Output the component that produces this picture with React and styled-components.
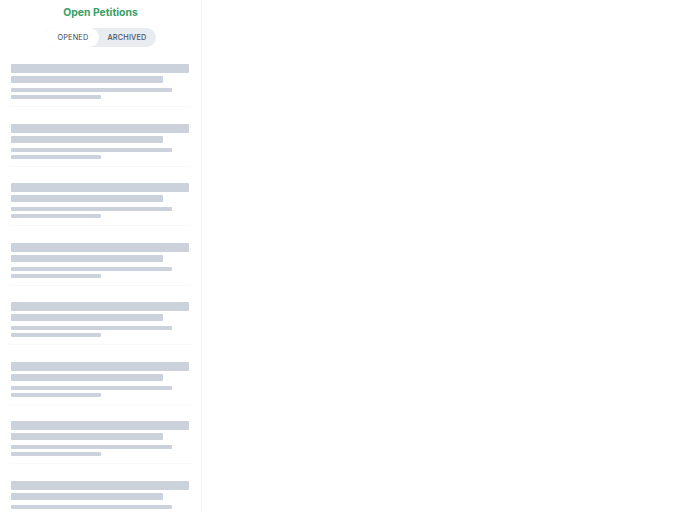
import React from "react";
import styled, { createGlobalStyle } from "styled-components";

const Global = createGlobalStyle`
  html, body { margin: 0; padding: 0; background: #fff; }
  body { font-family: Inter, "Noto Sans", sans-serif; }
  * { box-sizing: border-box; }
`;

const Layout = styled.div`
  display: flex;
  height: 100vh;
  overflow: hidden;
`;

const Sidebar = styled.aside`
  width: 202px;
  flex: none;
  border-right: 1px solid #f1f2f4;
  display: flex;
  flex-direction: column;
  overflow: hidden;
`;

const Title = styled.h1`
  margin: 6px 0 0;
  text-align: center;
  font-size: 10.4px;
  font-weight: 700;
  line-height: 13px;
  color: #38a169;
`;

const Toggle = styled.div`
  align-self: center;
  margin-top: 9px;
  display: flex;
  background: #e8ebf0;
  border-radius: 999px;
  height: 19px;
  margin-left: -1px;
`;

const ToggleButton = styled.button`
  border: none;
  font-family: inherit;
  font-size: 7.3px;
  font-weight: ${(p) => (p.$active ? 400 : 500)};
  letter-spacing: 0.2px;
  text-transform: uppercase;
  color: ${(p) => (p.$active ? "#3c4656" : "#4a5568")};
  background: ${(p) => (p.$active ? "#fff" : "transparent")};
  border-radius: 999px;
  padding: 0 ${(p) => (p.$active ? "11px" : "9px")} 0 ${(p) => (p.$active ? "13px" : "8px")};
  height: 19px;
  cursor: pointer;
`;

const List = styled.div`
  margin-top: 9px;
  padding: 0 8px 0 8px;
  display: flex;
  flex-direction: column;
  gap: 9.5px;
`;

const Card = styled.div`
  padding: 8px 4px 7px 3px;
  border-radius: 3px;
  box-shadow: 0 1px 1px rgba(0, 0, 0, 0.03), 0 0 1px rgba(0, 0, 0, 0.02);
  display: flex;
  flex-direction: column;
`;

const Bar = styled.div`
  background: #cbd2dc;
  border-radius: 1px;
  height: ${(p) => p.$h}px;
  width: ${(p) => p.$w};
  margin-top: ${(p) => p.$mt}px;
`;

function SkeletonCard() {
  return (
    <Card>
      <Bar $h={9} $w="100%" $mt={0} />
      <Bar $h={7} $w="85.5%" $mt={3} />
      <Bar $h={4} $w="90.5%" $mt={5} />
      <Bar $h={4} $w="50.3%" $mt={3} />
    </Card>
  );
}

export default function App() {
  return (
    <>
      <Global />
      <Layout>
        <Sidebar>
          <Title>Open Petitions</Title>
          <Toggle>
            <ToggleButton $active>Opened</ToggleButton>
            <ToggleButton>Archived</ToggleButton>
          </Toggle>
          <List>
            {Array.from({ length: 8 }).map((_, i) => (
              <SkeletonCard key={i} />
            ))}
          </List>
        </Sidebar>
      </Layout>
    </>
  );
}
